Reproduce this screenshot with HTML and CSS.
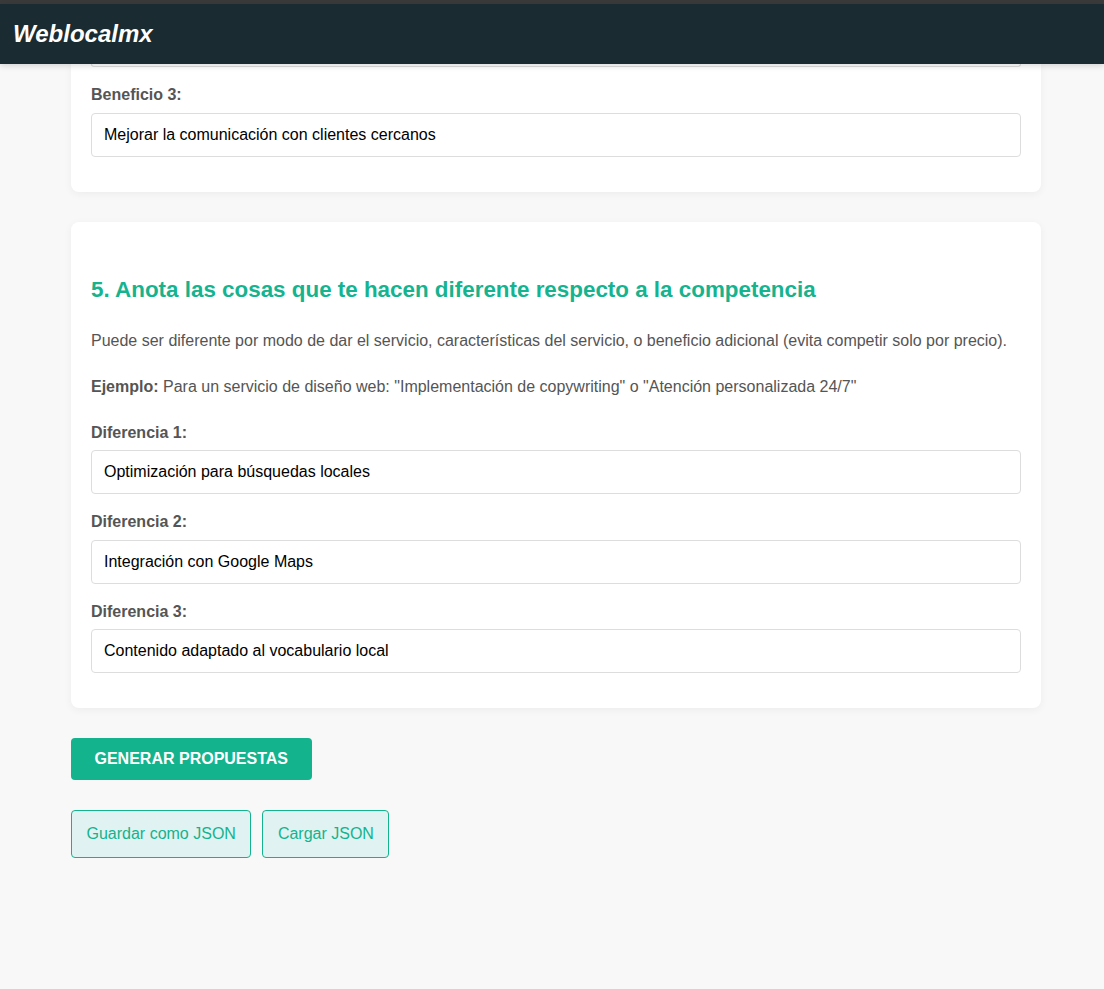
FILE: index.html
```html
<!DOCTYPE html>
<html lang="es">
<head>
<meta charset="utf-8">
<title>Weblocalmx</title>
<link rel="stylesheet" href="styles.css">
</head>
<body>
<div class="topstrip"></div>
<header class="site-header">
  <h1 class="brand">Weblocalmx</h1>
</header>
<main class="container">
  <section class="card card-partial">
    <div class="input-tail"></div>
    <div class="form-group">
      <label class="field-label">Beneficio 3:</label>
      <input class="field-input" type="text" value="Mejorar la comunicación con clientes cercanos">
    </div>
  </section>

  <section class="card">
    <h2 class="section-title">5. Anota las cosas que te hacen diferente respecto a la competencia</h2>
    <p class="hint">Puede ser diferente por modo de dar el servicio, características del servicio, o beneficio adicional (evita competir solo por precio).</p>
    <p class="hint"><strong>Ejemplo:</strong> Para un servicio de diseño web: "Implementación de copywriting" o "Atención personalizada 24/7"</p>
    <div class="form-group">
      <label class="field-label">Diferencia 1:</label>
      <input class="field-input" type="text" value="Optimización para búsquedas locales">
    </div>
    <div class="form-group">
      <label class="field-label">Diferencia 2:</label>
      <input class="field-input" type="text" value="Integración con Google Maps">
    </div>
    <div class="form-group">
      <label class="field-label">Diferencia 3:</label>
      <input class="field-input" type="text" value="Contenido adaptado al vocabulario local">
    </div>
  </section>

  <button class="btn-primary" type="button">Generar propuestas</button>

  <div class="file-actions">
    <button class="btn-secondary" type="button">Guardar como JSON</button>
    <button class="btn-secondary" type="button">Cargar JSON</button>
  </div>
</main>
</body>
</html>
```
FILE: styles.css
```css
* { box-sizing: border-box; }

html, body {
  margin: 0;
  padding: 0;
}

body {
  background: #f8f8f8;
  font-family: "Liberation Sans", Arial, sans-serif;
  font-size: 16px;
  line-height: 1.6;
  color: #555;
  height: 989px;
  overflow: hidden;
}

.topstrip {
  height: 4px;
  background: #3a3a3a;
}

.site-header {
  position: relative;
  z-index: 2;
  height: 60px;
  background: #1a2b31;
  box-shadow: 0 2px 6px rgba(0, 0, 0, 0.15);
  display: flex;
  align-items: center;
  padding: 0 13px;
}

.brand {
  margin: 0;
  color: #fff;
  font-size: 24px;
  font-weight: bold;
  font-style: italic;
  line-height: 1;
}

.container {
  width: 970px;
  margin: 0 0 0 71px;
}

.card {
  background: #fff;
  border-radius: 8px;
  box-shadow: 0 2px 8px rgba(0, 0, 0, 0.05);
  padding: 20px;
  margin-bottom: 30px;
}

.card-partial {
  border-radius: 0 0 8px 8px;
  padding-top: 0;
}

.input-tail {
  height: 3px;
  border: 1px solid #ddd;
  border-top: none;
  border-radius: 0 0 4px 4px;
  margin-bottom: 15px;
}

.section-title {
  margin: 30px 0 21px;
  font-size: 22.4px;
  font-weight: bold;
  color: #16b38f;
}

.hint {
  margin: 0 0 20px;
}

.hint strong {
  color: #555;
}

.form-group {
  margin-bottom: 15px;
}

.field-label {
  display: block;
  font-weight: bold;
  margin-bottom: 5px;
  color: #555;
}

.field-input {
  display: block;
  width: 100%;
  padding: 12px;
  border: 1px solid #ddd;
  border-radius: 4px;
  font-family: "Liberation Sans", Arial, sans-serif;
  font-size: 16px;
  line-height: 18px;
  color: #000;
  background: #fff;
}

.btn-primary {
  display: block;
  background: #13b38e;
  color: #fff;
  border: none;
  border-radius: 4px;
  padding: 12px 23.5px;
  font-family: "Liberation Sans", Arial, sans-serif;
  font-size: 16px;
  font-weight: bold;
  line-height: 18px;
  text-transform: uppercase;
  margin-bottom: 30px;
}

.file-actions {
  display: flex;
  gap: 11px;
}

.btn-secondary {
  background: #e0f2f1;
  color: #13b38e;
  border: 1px solid #13b38e;
  border-radius: 4px;
  padding: 10px 14.5px;
  font-family: "Liberation Sans", Arial, sans-serif;
  font-size: 16px;
  line-height: 25.6px;
}
```
